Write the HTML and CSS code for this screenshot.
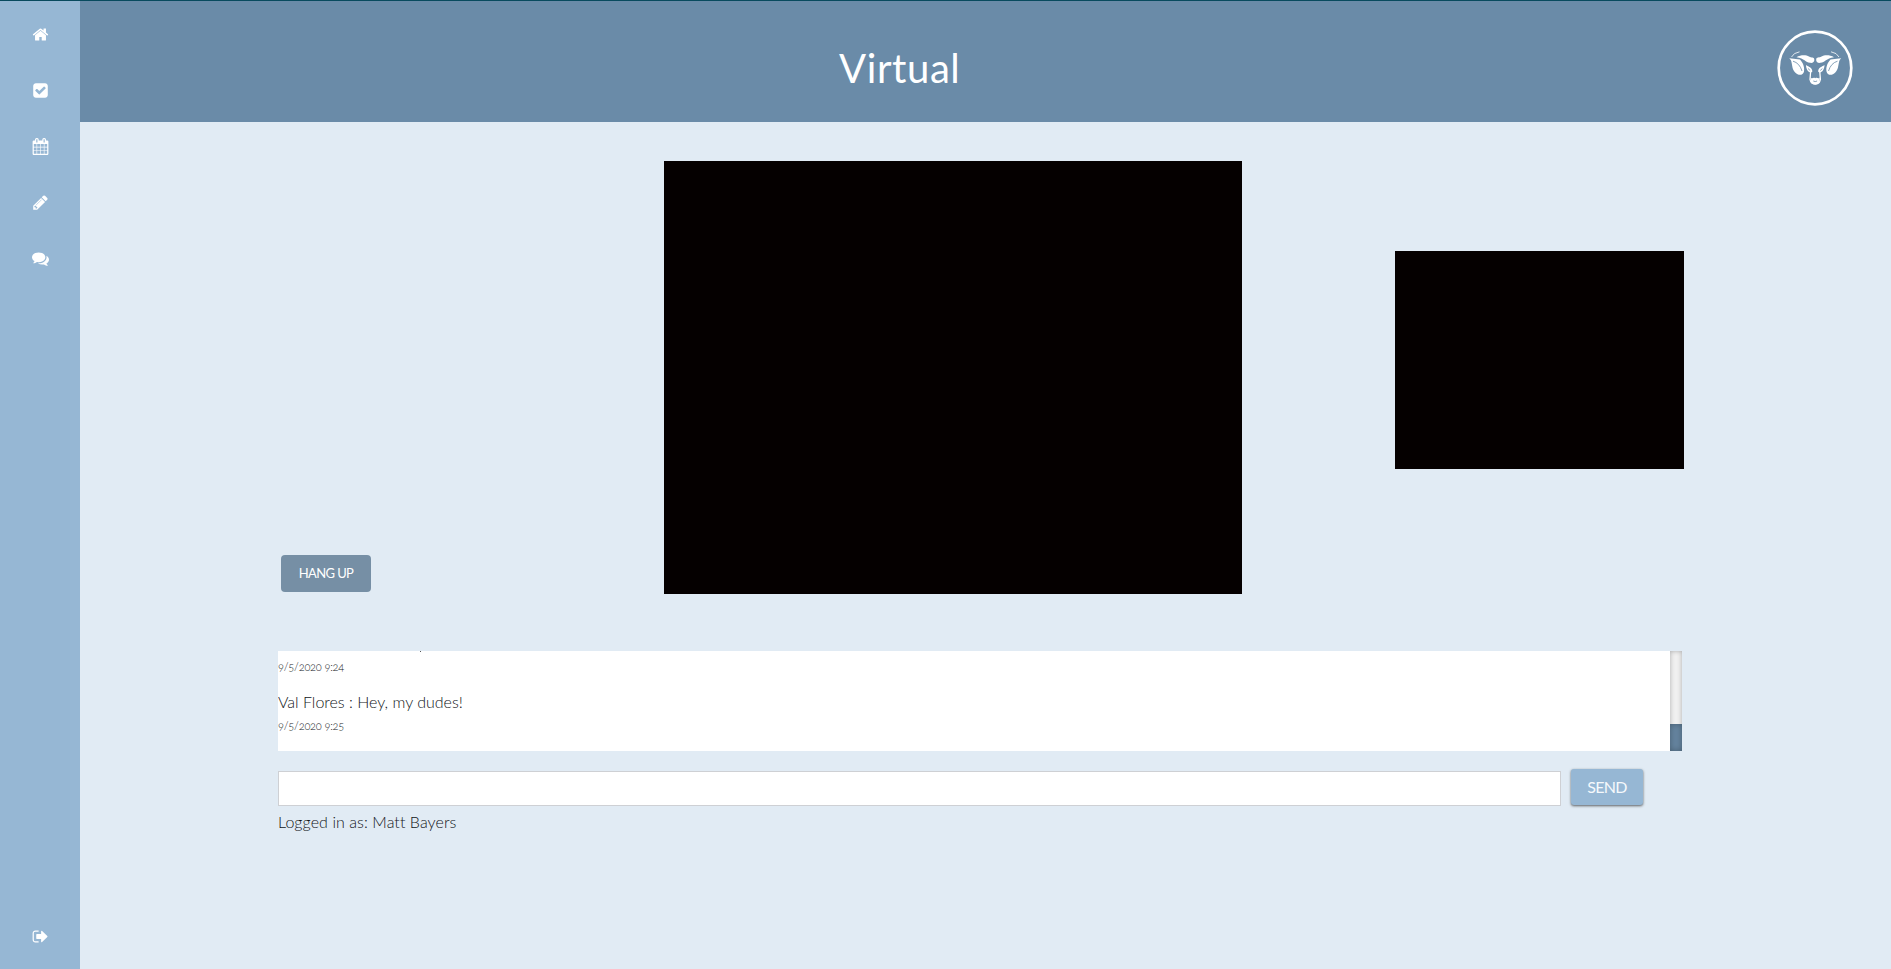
FILE: index.html
```html
<!DOCTYPE html>
<html lang="en">
<head>
<meta charset="utf-8">
<title>Virtual</title>
<link rel="stylesheet" href="styles.css">
</head>
<body>
<div class="app">
  <nav class="sidebar">
    <a class="nav-link"><svg class="icon" viewBox="0 0 1792 1792"><path d="M1472 992v480q0 26-19 45t-45 19h-384v-384h-256v384h-384q-26 0-45-19t-19-45v-480q0-1 .5-3t.5-3l575-474 575 474q1 2 1 6zm223-69l-62 74q-8 9-21 11h-3q-13 0-21-7l-692-577-692 577q-12 8-24 7-13-2-21-11l-62-74q-8-10-7-23.5t11-21.5l719-599q32-26 76-26t76 26l244 204v-195q0-14 9-23t23-9h192q14 0 23 9t9 23v408l219 182q10 8 11 21.5t-7 23.5z"/></svg></a>
    <a class="nav-link"><svg class="icon" viewBox="0 0 1792 1792"><path d="M813 1299l614-614q19-19 19-45t-19-45l-102-102q-19-19-45-19t-45 19l-467 467-211-211q-19-19-45-19t-45 19l-102 102q-19 19-19 45t19 45l358 358q19 19 45 19t45-19zm851-883v960q0 119-84.5 203.5t-203.5 84.5h-960q-119 0-203.5-84.5t-84.5-203.5v-960q0-119 84.5-203.5t203.5-84.5h960q119 0 203.5 84.5t84.5 203.5z"/></svg></a>
    <a class="nav-link"><svg class="icon" viewBox="0 0 1792 1792"><path d="M192 1664h288v-288h-288v288zm352 0h320v-288h-320v288zm-352-352h288v-320h-288v320zm352 0h320v-320h-320v320zm-352-384h288v-288h-288v288zm736 736h320v-288h-320v288zm-384-736h320v-288h-320v288zm768 736h288v-288h-288v288zm-384-352h320v-320h-320v320zm-352-864v-288q0-13-9.5-22.5t-22.5-9.5h-64q-13 0-22.5 9.5t-9.5 22.5v288q0 13 9.5 22.5t22.5 9.5h64q13 0 22.5-9.5t9.5-22.5zm736 864h288v-320h-288v320zm-384-384h320v-288h-320v288zm384 0h288v-288h-288v288zm32-480v-288q0-13-9.5-22.5t-22.5-9.5h-64q-13 0-22.5 9.5t-9.5 22.5v288q0 13 9.5 22.5t22.5 9.5h64q13 0 22.5-9.5t9.5-22.5zm384-64v1280q0 52-38 90t-90 38h-1408q-52 0-90-38t-38-90v-1280q0-52 38-90t90-38h128v-96q0-66 47-113t113-47h64q66 0 113 47t47 113v96h384v-96q0-66 47-113t113-47h64q66 0 113 47t47 113v96h128q52 0 90 38t38 90z"/></svg></a>
    <a class="nav-link"><svg class="icon" viewBox="0 0 1792 1792"><path d="M491 1536l91-91-235-235-91 91v107h128v128h107zm523-928q0-22-22-22-10 0-17 7l-542 542q-7 7-7 17 0 22 22 22 10 0 17-7l542-542q7-7 7-17zm-54-192l416 416-832 832h-416v-416zm683 96q0 53-37 90l-166 166-416-416 166-165q36-38 90-38 53 0 91 38l235 234q37 39 37 91z"/></svg></a>
    <a class="nav-link"><svg class="icon" viewBox="0 0 1792 1792"><path d="M1408 768q0 139-94 257t-256.500 186.500-353.500 68.500q-86 0-176-16-124 88-278 128-36 9-86 16h-3q-11 0-20.500-8t-11.500-21q-1-3-1-6.500t.5-6.500 2-6l2.500-5 3.500-5.500 4-5 4.500-5 4-4.500q5-6 23-25t26-29.500 22.500-29 25-38.500 20.500-44q-124-72-195-177t-71-224q0-139 94-257t256.500-186.500 353.500-68.500 353.500 68.500 256.500 186.500 94 257zm384 256q0 120-71 224.500t-195 176.500q10 24 20.500 44t25 38.500 22.500 29 26 29.500 23 25q1 1 4 4.500t4.500 5 4 5 3.500 5.500l2.500 5 2 6 .5 6.500-1 6.500q-3 14-13 22t-22 7q-50-7-86-16-154-40-278-128-90 16-176 16-271 0-472-132 58 4 88 4 161 0 309-45t264-129q125-92 192-212t67-254q0-77-23-152 129 71 204 178t75 230z"/></svg></a>
    <a class="nav-link nav-link-exit"><svg class="icon" viewBox="0 0 1792 1792"><path d="M704 1440q0 4 1 20t.5 26.500-3 23.500-10 19.500-20.500 6.500h-320q-119 0-203.500-84.500t-84.500-203.500v-704q0-119 84.500-203.500t203.500-84.500h320q13 0 22.500 9.500t9.500 22.500q0 4 1 20t.5 26.500-3 23.500-10 19.500-20.500 6.500h-320q-66 0-113 47t-47 113v704q0 66 47 113t113 47h312l11.500 1 11.500 3 8 5.500 7 9 2 13.500zm928-544q0 26-19 45l-544 544q-19 19-45 19t-45-19-19-45v-288h-448q-26 0-45-19t-19-45v-384q0-26 19-45t45-19h448v-288q0-26 19-45t45-19 45 19l544 544q19 19 19 45z"/></svg></a>
  </nav>
  <div class="page">
    <header class="header">
      <h1 class="title">Virtual</h1>
      <svg class="logo" viewBox="0 0 76 76">
        <circle class="logo-ring" cx="38" cy="38" r="36.300"/>
        <g class="logo-shape">
          <path d="M19.500 27.200C23.500 24.800 29 24.600 32 26.600C34.500 28.200 37 26.800 37.300 29.500C37.600 32.200 35.500 33.200 33 32.800C28.500 32.300 27.500 28.500 19.500 27.200Z"/>
          <path d="M57 27.200C53 24.800 47.500 24.600 44.500 26.600C42 28.200 39.500 26.800 39.200 29.500C38.900 32.200 41 33.200 43.500 32.800C48 32.300 49 28.500 57 27.200Z"/>
          <path d="M12.300 28.300L23 29.600C25.700 32.500 27.800 37 27 41.500C26 45.600 21.500 46 18.200 42.500C14.500 38.500 15.600 34 13.800 29.900Z"/>
          <path d="M64.200 28.300L53.500 29.600C50.800 32.500 48.700 37 49.500 41.500C50.500 45.600 55 46 58.300 42.500C62 38.500 60.900 34 62.700 29.900Z"/>
          <path d="M29 35C32 37 35.500 37.500 35.300 41.800C32.500 44 29 40 29 35Z"/>
          <path d="M47.500 35C44.500 37 41 37.500 41.200 41.800C44 44 47.500 40 47.500 35Z"/>
          <path d="M33.600 47.500C35.500 49.500 36 47 38.200 48.200C40.500 47 41 49.500 42.800 47.500L42.500 53Q38.200 56 34 53Z"/>
        </g>
        <g class="logo-line">
          <path class="logo-tip" d="M14.500 27Q16.500 22.800 22.500 21.800M62 27Q60 22.800 54 21.800"/>
          <path d="M33.600 42L33 49.500Q33.800 53.800 38.200 54.200Q42.600 53.800 43.400 49.500L42.800 42"/>
        </g>
        <path class="logo-cut" d="M16 31.200Q22.500 33 25 41M60.500 31.200Q54 33 51.500 41M36.300 51Q38.200 52.200 40.100 51M31 38.500L33.200 40.500M45.400 38.500L43.200 40.500"/>
      </svg>
    </header>
    <main class="content">
      <section class="call">
        <div class="controls"><button class="hang-up">HANG UP</button></div>
        <div class="remote-video"></div>
        <div class="local-video"></div>
      </section>
      <section class="chat">
        <div class="log">
          <div class="messages">
            <i class="overflow-tail"></i>
            <time class="stamp">9/5/2020 9:24</time>
            <p class="message">Val Flores : Hey, my dudes!</p>
            <time class="stamp">9/5/2020 9:25</time>
          </div>
          <div class="scroll-track"><div class="scroll-thumb"></div></div>
        </div>
        <div class="composer">
          <input class="entry" type="text">
          <button class="send">SEND</button>
        </div>
        <p class="user">Logged in as: Matt Bayers</p>
      </section>
    </main>
  </div>
</div>
</body>
</html>
```
FILE: styles.css
```css
* { box-sizing: border-box; }
body {
  margin: 0;
  background: #e1ebf4;
  color: #111519;
  font-family: Lato, "Open Sans", sans-serif;
  font-size: 16px;
}
.app { display: flex; height: 100vh; border-top: 1px solid #084a5e; }
.sidebar {
  display: flex;
  flex-direction: column;
  width: 80px;
  padding: 5px 0;
  background: #96b7d4;
}
.nav-link { display: flex; align-items: center; justify-content: center; height: 56px; }
.nav-link-exit { margin-top: auto; }
.icon { width: 17px; height: 17px; fill: #fff; }
.page { flex: 1; display: flex; flex-direction: column; }
.header {
  display: flex;
  align-items: center;
  height: 121px;
  padding: 0 38px 0 759px;
  background: #6a8ba8;
}
.title {
  margin: 12px 0 0;
  color: #fff;
  font-size: 40px;
  font-weight: 400;
  line-height: 48px;
  letter-spacing: 0.6px;
}
.logo { width: 76px; height: 76px; margin: 12px 0 0 auto; }
.logo-ring { fill: none; stroke: #fff; stroke-width: 2.7; }
.logo-shape { fill: #fff; }
.logo-line { fill: none; stroke: #fff; stroke-width: 1.3; }
.logo-tip { stroke-width: 0.8; }
.logo-cut { fill: none; stroke: #6a8ba8; stroke-width: 0.8; }
.content { padding: 39px 0 0 198px; }
.call { display: flex; height: 433px; }
.controls { display: flex; align-items: flex-end; width: 386px; padding: 0 0 2px 3px; }
.hang-up {
  width: 90px;
  height: 37px;
  padding: 0 0 1px;
  border: 0;
  border-radius: 4px;
  background: #768fa5;
  color: #fff;
  font: 400 13px/36px Lato, sans-serif;
  letter-spacing: -0.6px;
}
.remote-video { width: 578px; height: 433px; background: #050000; }
.local-video { width: 289px; height: 218px; margin: 90px 0 0 153px; background: #050000; }
.chat { width: 1404px; margin-top: 57px; }
.log { display: flex; height: 100px; background: #fff; }
.messages { flex: 1; overflow: hidden; font-weight: 300; }
.overflow-tail { display: block; width: 1px; height: 1px; margin-left: 142px; background: #555; }
.stamp {
  display: block;
  height: 16px;
  margin-top: 7px;
  font-size: 11px;
  line-height: 16px;
  letter-spacing: -0.2px;
  font-feature-settings: "onum";
}
.message { margin: 15px 0 0; line-height: 24px; height: 21px; }
.scroll-track {
  display: flex;
  align-items: flex-end;
  width: 12px;
  background: #f1f1f1;
  box-shadow: inset 0 0 5px #aaa;
}
.scroll-thumb { width: 12px; height: 27px; background: #65849f; box-shadow: inset 0 0 6px rgba(0, 0, 0, 0.3); }
.composer { display: flex; gap: 10px; margin-top: 18px; }
.entry { width: 1283px; height: 35px; margin-top: 2px; border: 1px solid #ced0d4; background: #fff; }
.send {
  width: 72px;
  height: 36px;
  padding: 0 0 1px;
  border: 0;
  border-radius: 3px;
  background: #96b7d4;
  box-shadow: 0 1px 3px rgba(0, 0, 0, 0.4), 0 1px 2px rgba(0, 0, 0, 0.25);
  color: #f5f9fc;
  font: 400 16px/35px Lato, sans-serif;
  letter-spacing: -0.7px;
}
.user { margin: 4px 0 0; font-weight: 300; line-height: 24px; letter-spacing: 0.07px; }
```
